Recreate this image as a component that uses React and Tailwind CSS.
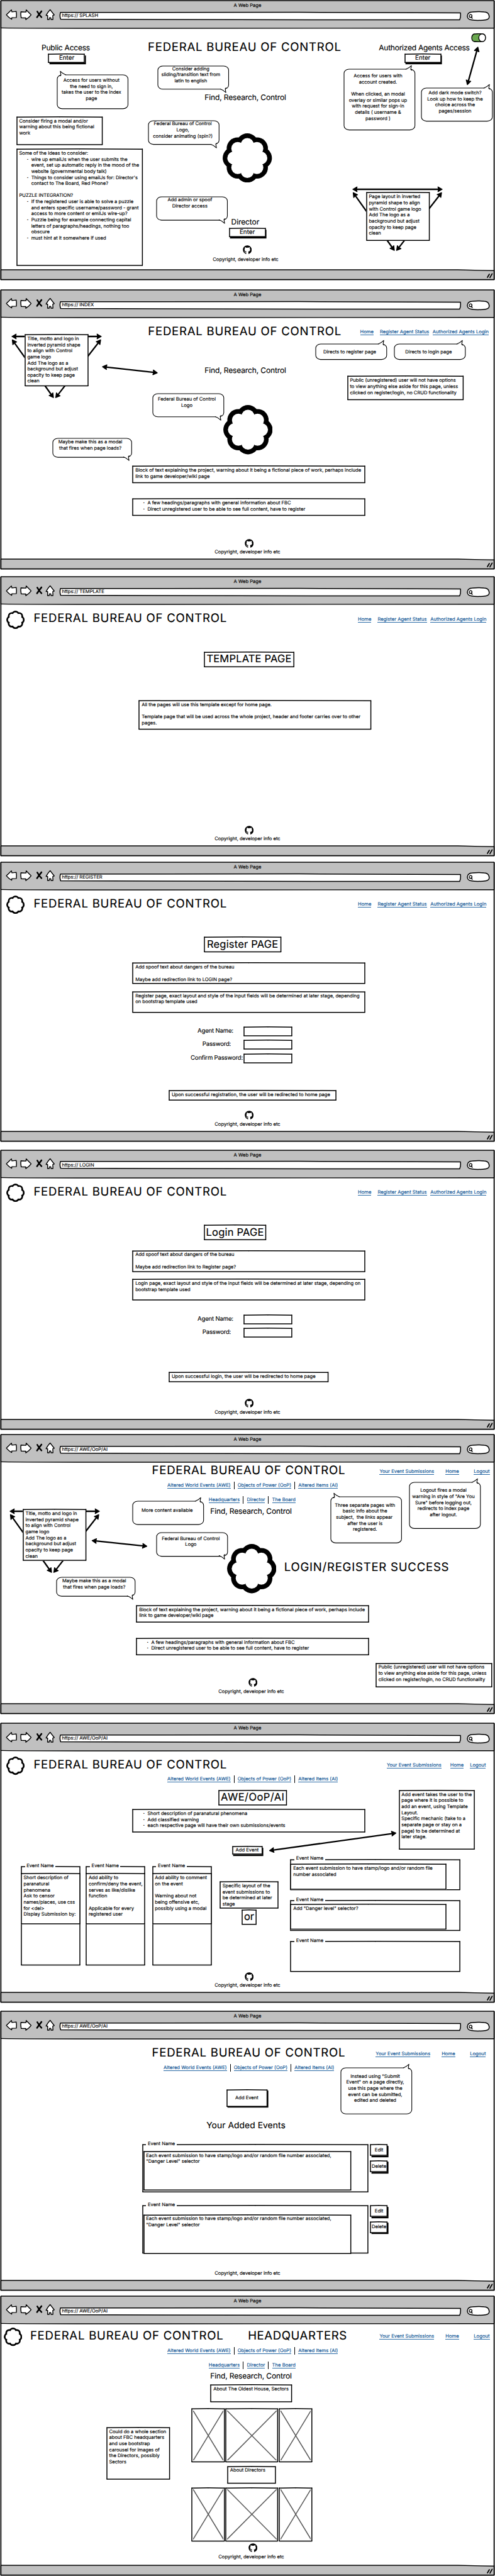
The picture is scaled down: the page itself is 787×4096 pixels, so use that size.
import React from "react";
import { FaGithub } from "react-icons/fa";

/* ---------- sketch primitives ---------- */

function Frame() {
  return (
    <svg className="pointer-events-none absolute inset-[0.7px] h-[calc(100%-1.4px)] w-[calc(100%-1.4px)] overflow-visible" stroke="#000" strokeWidth="1.5" strokeLinecap="round">
      <line x1="0" y1="0.2" x2="50%" y2="-0.2" />
      <line x1="50%" y1="-0.2" x2="100%" y2="0.2" />
      <g transform="translate(0 0.1)">
        <line x1="0" y1="100%" x2="100%" y2="100%" />
      </g>
      <line x1="0" y1="0" x2="0" y2="100%" />
      <line x1="100%" y1="0" x2="100%" y2="100%" />
    </svg>
  );
}

function Note({ className = "", text, children, pad = "pt-[2.6px]" }) {
  return (
    <div className={`${className.includes("absolute") ? "" : "relative"} shrink-0 bg-white ${className}`}>
      <Frame />
      <div className={`pl-[4.4px] whitespace-pre ${pad}`}>{text}</div>
      {children}
    </div>
  );
}

function Bullets({ items, className = "" }) {
  return (
    <ul className={className}>
      {items.map((t) => (
        <li key={t} className="flex">
          <span className="w-[8px] shrink-0 pl-[1px] font-bold">·</span>
          <span className="whitespace-pre">{t}</span>
        </li>
      ))}
    </ul>
  );
}

const TAILS = {
  tl: "left-[4.5px] -top-[5.4px]",
  tr: "right-[4.5px] -top-[5.4px] -scale-x-100",
  br: "right-[4px] -bottom-[5px] -scale-100",
};

function Bubble({ className, text, tail, pad }) {
  return (
    <div className={`absolute ${className}`}>
      <svg className="absolute inset-[0.6px] h-[calc(100%-1.2px)] w-[calc(100%-1.2px)] overflow-visible">
        <rect width="100%" height="100%" rx="8" ry="6.5" fill="#fff" stroke="#000" strokeWidth="1.1" />
      </svg>
      <svg className={`absolute h-[7.5px] w-[11px] overflow-visible ${TAILS[tail]}`} viewBox="0 0 11 7.5">
        <path d="M1.6 7.4 L1.9 5.4 L9.2 5.4 L9.4 6.6 Z" fill="#fff" />
        <path d="M0 7.6 Q1.4 7.4 1.9 6.4 L0.9 0.4 Q4.6 4.2 9.6 6" fill="#fff" stroke="#000" strokeWidth="1.1" strokeLinejoin="round" strokeLinecap="round" />
      </svg>
      <div className={`relative pr-[4px] text-center whitespace-pre ${pad}`}>{text}</div>
    </div>
  );
}

function Button({ className = "", label, size = "" }) {
  return (
    <div className={`relative flex shrink-0 items-center justify-center bg-white shadow-[1.6px_2.2px_0_#000] ${className}`}>
      <Frame />
      <span className={size}>{label}</span>
    </div>
  );
}

function Fieldset({ className = "", children }) {
  return (
    <div className={`relative shrink-0 ${className}`}>
      <Frame />
      <span className="absolute -top-[5.6px] left-[6.5px] bg-white px-[2.6px]">Event Name</span>
      {children}
    </div>
  );
}

const LOBES = [0, 45, 90, 135, 180, 225, 270, 315].map((deg) => {
  const a = (deg * Math.PI) / 180;
  return [106 * Math.cos(a), 106 * Math.sin(a)];
});

function Emblem({ className }) {
  return (
    <svg className={`shrink-0 ${className}`} viewBox="-193 -193 386 386">
      {LOBES.map(([x, y], i) => (
        <circle key={i} cx={x} cy={y} r="86.5" fill="#000" />
      ))}
      {LOBES.map(([x, y], i) => (
        <circle key={i} cx={x} cy={y} r="50.5" fill="#fff" />
      ))}
      <circle r="127" fill="#fff" />
    </svg>
  );
}

function Arrow({ from, to }) {
  const [x1, y1] = from;
  const [x2, y2] = to;
  const a = Math.atan2(y2 - y1, x2 - x1);
  const deg = (a * 180) / Math.PI;
  const dx = 4 * Math.cos(a);
  const dy = 4 * Math.sin(a);
  const head = "M1 0 L7.6 -3.7 L6.8 0 L7.6 3.7 Z";
  return (
    <g stroke="#000" strokeLinejoin="round">
      <line x1={x1 + dx} y1={y1 + dy} x2={x2 - dx} y2={y2 - dy} strokeWidth="2.3" />
      <path d={head} strokeWidth="1.4" transform={`translate(${x1} ${y1}) rotate(${deg})`} />
      <path d={head} strokeWidth="1.4" transform={`translate(${x2} ${y2}) rotate(${deg + 180})`} />
    </g>
  );
}

function Arrows({ children }) {
  return <svg className="pointer-events-none absolute inset-0 h-full w-full overflow-visible">{children}</svg>;
}

function Pyramid({ className, noteClass, text }) {
  return (
    <div className={`absolute h-[100px] w-[144px] ${className}`}>
      <Arrows>
        <Arrow from={[0, 2]} to={[144, 2]} />
        <Arrow from={[1, 6.6]} to={[67.5, 100]} />
        <Arrow from={[142.6, 6.6]} to={[70, 100]} />
      </Arrows>
      <Note className={`absolute ${noteClass}`} text={text} />
    </div>
  );
}

/* ---------- browser chrome ---------- */

function Outline() {
  return (
    <svg className="pointer-events-none absolute inset-0 h-full w-full overflow-visible" viewBox="0 0 787 444" fill="none" stroke="#000" strokeWidth="1.7">
      <path d="M1 0 H786" />
      <path d="M1.4 0 V444" />
      <path d="M785.6 0 V444" />
      <path d="M1 43.4 Q60 44.2 200 44 T786 43.8" strokeWidth="1.4" />
      <path d="M1 428 H728 L786 429.4" strokeWidth="1.3" />
      <path d="M1 443.6 H786" strokeWidth="1.9" />
      <g strokeWidth="1.8" strokeLinecap="round">
        <path d="M775 440 L778 435" />
        <path d="M779 440.4 L782.4 434.4" />
      </g>
    </svg>
  );
}

function NavIcons() {
  return (
    <svg className="h-[18.4px] w-[80px] overflow-visible" viewBox="40 65 390 90" fill="#fff" stroke="#000" strokeWidth="7" strokeLinejoin="round" strokeLinecap="round">
      <path d="M50 112 L89 74 L93 89 L126 85 Q131 108 127 133 L92 134 L91 146 Q66 132 50 112 Z" />
      <path d="M242 112 L204 74 L202 90 L163 88 Q159 110 165 135 L201 136 L201 149 Q226 134 242 112 Z" />
      <path d="M290 86 Q304 112 323 131 M323 84 Q304 108 288 131" fill="none" strokeWidth="12" />
      <path d="M390 72 L422 113 L411 117 L412 148 L397 148 L395 134 L385 134 L383 148 L370 148 L371 118 L359 116 Q372 90 390 72 Z" />
    </svg>
  );
}

function Chrome({ path }) {
  return (
    <div className="h-[44px] bg-[#c0c0c0]">
      <div className="flex h-[17px] justify-center pt-[3.2px]">A Web Page</div>
      <div className="flex h-[14.4px] items-center pl-[8.2px]">
        <div className="-mt-[5px]">
          <NavIcons />
        </div>
        <div className="relative ml-[6.6px] flex h-[12.6px] w-[638px] items-center pb-[0.5px] pl-[3.8px] whitespace-pre">
          <svg className="absolute inset-0 h-full w-full overflow-visible" viewBox="0 0 638 12.6" preserveAspectRatio="none">
            <path d="M1.2 0.8 L380 0.6 L637 1.4 Q638 7 635.8 12.6 L400 12.4 L1.4 11.6 Q-0.6 6 1.2 0.8 Z" fill="#fff" stroke="#000" strokeWidth="1.5" />
          </svg>
          <span className="relative">{`https:// ${path}`}</span>
        </div>
        <svg className="ml-[9.4px] h-[15px] w-[37px] overflow-visible" viewBox="0 0 37 15">
          <path d="M1 7.5 Q1.5 1.4 9 1 Q18 0 28 1 Q34.6 1.2 35.6 7 Q36.6 12.6 31 13.4 Q18 15.4 7 13.6 Q1.4 13 1 7.5 Z" fill="#fff" stroke="#000" strokeWidth="1.5" />
          <circle cx="6.2" cy="7.4" r="2.2" fill="none" stroke="#000" strokeWidth="1.3" />
          <path d="M7.2 8.8 L8.8 11.2" stroke="#000" strokeWidth="1.5" strokeLinecap="round" />
        </svg>
      </div>
    </div>
  );
}

function Browser({ path, className = "", children }) {
  return (
    <section className={`relative h-[444px] shrink-0 ${className}`}>
      <Chrome path={path} />
      <div className="relative flex h-[384px] flex-col bg-white">{children}</div>
      <div className="h-[16px] bg-[#c0c0c0]" />
      <Outline />
    </section>
  );
}

/* ---------- page parts ---------- */

function Title({ children = "FEDERAL BUREAU OF CONTROL", className = "" }) {
  return <h1 className={`shrink-0 text-[18.6px] leading-[22px] tracking-[0.75px] whitespace-pre ${className}`}>{children}</h1>;
}

function Motto({ className }) {
  return <h2 className={`shrink-0 text-[12px] leading-[14px] tracking-[-0.13px] whitespace-pre ${className}`}>Find, Research, Control</h2>;
}

function Link({ children, className = "" }) {
  return <a className={`shrink-0 border-b border-[#2a6ba6] leading-[8px] tracking-[0.03px] whitespace-pre text-[#0b5394] ${className}`}>{children}</a>;
}

function Header({ className, children, links }) {
  return (
    <header className={`flex h-[22px] shrink-0 items-center ${className}`}>
      {children}
      <nav className="mt-[4px] ml-auto flex">{links}</nav>
    </header>
  );
}

function PublicLinks({ className = "" }) {
  return (
    <div className={`flex ${className}`}>
      <Link className="mr-[10px]">Home</Link>
      <Link className="mr-[5.5px]">Register Agent Status</Link>
      <Link>Authorized Agents Login</Link>
    </div>
  );
}

function AgentLinks({ className = "", gap = "gap-[18px]", last = "ml-[5.6px]" }) {
  return (
    <div className={`flex ${gap} ${className}`}>
      <Link>Your Event Submissions</Link>
      <Link>Home</Link>
      <Link className={last}>Logout</Link>
    </div>
  );
}

function LinkBar({ className, items }) {
  return (
    <nav className={`flex h-[12.4px] shrink-0 items-center gap-[5.1px] ${className}`}>
      {items.map((t, i) => (
        <React.Fragment key={t}>
          {i > 0 && <span className="h-full w-px bg-black" />}
          <Link className="mt-[0.4px]">{t}</Link>
        </React.Fragment>
      ))}
    </nav>
  );
}

const TOPICS = ["Altered World Events (AWE)", "Objects of Power (OoP)", "Altered Items (AI)"];
const PLACES = ["Headquarters", "Director", "The Board"];

function Footer({ className = "pb-[6.2px]", icon = true }) {
  return (
    <footer className={`mt-auto flex shrink-0 flex-col items-center ${className}`}>
      {icon && <FaGithub className="mb-[2.1px] ml-[5px] h-[14.4px] w-[14.4px]" />}
      <p className="whitespace-pre">Copyright, developer info etc</p>
    </footer>
  );
}

function Heading({ className, children }) {
  return (
    <div className={`relative flex shrink-0 items-center justify-center bg-white text-[16.5px] leading-[20px] whitespace-pre ${className}`}>
      <Frame />
      <span className="-mt-[2px]">{children}</span>
    </div>
  );
}

function Field({ label, labelClass = "", className = "" }) {
  return (
    <div className={`flex h-[15.4px] items-center ${className}`}>
      <div className={`flex w-[84px] shrink-0 justify-center text-[9.6px] leading-[12px] tracking-[-0.2px] whitespace-pre ${labelClass}`}>{label}</div>
      <div className="relative ml-auto h-full w-[77.3px] bg-white">
        <Frame />
      </div>
    </div>
  );
}

function Picture({ className }) {
  return (
    <div className={`relative h-full ${className}`}>
      <Frame />
      <svg className="absolute inset-x-[2.4px] inset-y-[3px] h-[calc(100%-6px)] w-[calc(100%-4.8px)]" stroke="#595959" strokeWidth="1.5">
        <line x1="0" y1="0" x2="100%" y2="100%" />
        <line x1="100%" y1="0" x2="0" y2="100%" />
      </svg>
    </div>
  );
}

function Carousel({ className }) {
  return (
    <div className={`flex h-[85.7px] shrink-0 gap-[1.2px] ${className}`}>
      <Picture className="w-[53.2px]" />
      <Picture className="w-[83.8px]" />
      <Picture className="w-[53.2px]" />
    </div>
  );
}

const PROJECT = "Block of text explaining the project, warning about it being a fictional piece of work, perhaps include\nlink to game developer/wiki page";
const GENERAL = ["A few headings/paragraphs with general information about FBC", "Direct unregistered user to be able to see full content, have to register"];
const UNREGISTERED = "Public (unregistered) user will not have options\nto view anything else aside for this page, unless\nclicked on register/login, no CRUD functionality";
const INVERTED = "Title, motto and logo in\ninverted pyramid shape\nto align with Control\ngame logo\nAdd The logo as a\nbackground but adjust\nopacity to keep page\nclean";

/* ---------- pages ---------- */

function Splash() {
  return (
    <Browser path="SPLASH" className="mt-[1px]">
      <div className="grid grid-cols-[235px_310px_1fr]">
        <div className="flex flex-col pt-[24.3px]">
          <h3 className="ml-[66px] text-[12px] leading-[14px] tracking-[-0.22px] whitespace-pre">Public Access</h3>
          <Button className="mt-[2.3px] ml-[76.8px] h-[14.6px] w-[58.4px]" size="text-[9.8px]" label="Enter" />
          <Note className="mt-[85px] ml-[26.1px] h-[45.2px] w-[137px]" text={"Consider firing a modal and/or\nwarning about this being fictional\nwork"} />
          <Note className="mt-[6.1px] ml-[26.1px] h-[186.3px] w-[200.8px]" text="Some of the Ideas to consider:">
            <Bullets
              className="pl-[15.6px]"
              items={[
                "wire up emailJs when the user submits the\nevent, set up automatic reply in the mood of the\nwebsite (governmental body talk)",
                "Things to consider using emailJs for: Director's\ncontact to The Board, Red Phone?\n ",
              ]}
            />
            <p className="pl-[4.4px]">PUZZLE INTEGRATION?</p>
            <Bullets
              className="pl-[15.6px]"
              items={[
                "If the registered user is able to solve a puzzle\nand enters specific username/password - grant\naccess to more content or emilJs wire-up?",
                "Puzzle being for example connecting capital\nletters of paragraphs/headings, nothing too\nobscure",
                "must hint at it somewhere if used",
              ]}
            />
          </Note>
        </div>
        <div className="flex flex-col pt-[19.4px]">
          <Title />
          <Motto className="mt-[61.9px] ml-[90.3px]" />
          <Emblem className="mt-[49.8px] ml-[119.4px] h-[78.4px] w-[78.4px]" />
          <h3 className="mt-[55.9px] ml-[132.6px] text-[12px] leading-[14px] tracking-[-0.1px]">Director</h3>
          <Button className="mt-[2.3px] ml-[128.9px] h-[14.6px] w-[58.4px]" size="text-[9.8px]" label="Enter" />
          <FaGithub className="mt-[12.6px] ml-[151px] h-[14.4px] w-[14.4px]" />
          <p className="mt-[3.6px] ml-[103.3px] whitespace-pre">Copyright, developer info etc</p>
        </div>
        <div className="flex flex-col pt-[8.1px]">
          <svg className="ml-[204.3px] h-[14px] w-[24px]" viewBox="0 0 24 14">
            <path d="M5 1 Q12 0.2 19 1 Q23 2 22.8 7 Q22.6 12.6 18 13.2 Q10 13.8 4.4 13 Q1 11.6 1 7 Q1.4 2 5 1 Z" fill="#6aa84f" stroke="#000" strokeWidth="1.3" />
            <ellipse cx="17.6" cy="7" rx="5.4" ry="6.1" fill="#fff" stroke="#000" strokeWidth="1.3" />
          </svg>
          <h3 className="mt-[2.2px] ml-[57.3px] text-[12px] leading-[14px] tracking-[-0.25px] whitespace-pre">Authorized Agents Access</h3>
          <Button className="mt-[2.3px] ml-[98px] h-[14.6px] w-[58.4px]" size="text-[9.8px]" label="Enter" />
        </div>
      </div>
      <Bubble tail="tl" className="top-[73.4px] left-[90.5px] h-[55.1px] w-[113.7px]" pad="pt-[4.5px]" text={"Access for users without\nthe need to sign in,\ntakes the user to the index\npage"} />
      <Bubble tail="br" className="top-[59.2px] left-[250px] h-[38px] w-[113.7px]" pad="pt-[0.4px] !pr-[7px]" text={"Consider adding\nsliding/transition text from\nlatin to english"} />
      <Bubble tail="br" className="top-[146.8px] left-[235.9px] h-[38.8px] w-[113.5px]" pad="pt-[0.7px]" text={"Federal Bureau of Control\nLogo,\nconsider animating (spin?)"} />
      <Bubble tail="br" className="top-[267.5px] left-[248.5px] h-[38.3px] w-[113.7px]" pad="pt-[0.4px] !pr-[7px]" text={"Add admin or spoof\nDirector access"} />
      <Bubble tail="tr" className="top-[64.7px] left-[546px] h-[97.8px] w-[113.9px]" pad="pt-[6.5px]" text={"Access for users with\naccount created.\n\nWhen clicked, an modal\noverlay or similar pops up\nwith request for sign-in\ndetails ( username &\npassword )"} />
      <Bubble tail="tr" className="top-[94.3px] left-[669px] h-[53.8px] w-[114px]" pad="pt-[3.9px] !pr-[5px]" text={"Add dark mode switch?\nLook up how to keep the\nchoice across the\npages/session"} />
      <Arrows>
        <Arrow from={[760, 29]} to={[742.8, 90.5]} />
      </Arrows>
      <Pyramid
        className="top-[253.6px] left-[560px]"
        noteClass="left-[22px] top-[7.2px] h-[77.5px] w-[101px]"
        text={"Page layout in inverted\npyramid shape to align\nwith Control game logo\nAdd The logo as a\nbackground but adjust\nopacity to keep page\nclean"}
      />
    </Browser>
  );
}

function Index() {
  return (
    <Browser path="INDEX" className="mt-[15.8px]">
      <Header className="mt-[11px] pl-[235.3px]" links={<PublicLinks className="mr-[10px]" />}>
        <Title />
      </Header>
      <Motto className="mt-[43.9px] ml-[325.3px]" />
      <Emblem className="mt-[48.4px] ml-[354.9px] h-[78.5px] w-[78.5px]" />
      <Note className="mt-[18.1px] ml-[210.8px] h-[27.9px] w-[370.4px]" text={PROJECT} />
      <Note className="mt-[24px] ml-[210.8px] h-[27.9px] w-[370.4px]">
        <Bullets className="pl-[15.6px]" items={GENERAL} />
      </Note>
      <Footer />
      <Pyramid className="top-[28.2px] left-[18px]" noteClass="left-[21px] -top-[1.5px] h-[82.7px] w-[101.4px]" text={INVERTED} />
      <Arrows>
        <Arrow from={[162, 78]} to={[251, 87.9]} />
      </Arrows>
      <Bubble tail="tr" className="top-[41.8px] left-[501px] h-[25.8px] w-[114px]" pad="pt-[8.8px]" text="Directs to register page" />
      <Bubble tail="tr" className="top-[41.8px] left-[626.4px] h-[25.8px] w-[114px]" pad="pt-[8.8px]" text="Directs to login page" />
      <Note className="absolute top-[92.9px] left-[552px] h-[38.8px] w-[184.8px]" text={UNREGISTERED} />
      <Bubble tail="br" className="top-[120.4px] left-[242px] h-[38px] w-[114px]" pad="pt-[5.1px]" text={"Federal Bureau of Control\nLogo"} />
      <Bubble tail="br" className="top-[191.5px] left-[83.3px] h-[31.3px] w-[126.5px]" pad="pt-[1.9px] !pr-[6px]" text={"Maybe make this as a modal\nthat fires when page loads?"} />
    </Browser>
  );
}

function TemplateHeader() {
  return (
    <Header className="mt-[11px] pl-[10px]" links={<PublicLinks className="mr-[13.6px]" />}>
      <Emblem className="mt-[4px] h-[29.2px] w-[29.2px]" />
      <Title className="ml-[14.2px]" />
    </Header>
  );
}

function Template() {
  return (
    <Browser path="TEMPLATE" className="mt-[12.4px]">
      <TemplateHeader />
      <Heading className="mt-[41.9px] ml-[324.2px] h-[24.6px] w-[143.6px] tracking-[0.16px]">TEMPLATE PAGE</Heading>
      <Note
        className="mt-[52.2px] ml-[220.8px] h-[46.7px] w-[370px]"
        pad="pt-[3.2px]"
        text={"All the pages will use this template except for home page.\n\nTemplate page that will be used across the whole project, header and footer carries over to other\npages."}
      />
      <Footer />
    </Browser>
  );
}

function Register() {
  return (
    <Browser path="REGISTER" className="mt-[9.5px]">
      <TemplateHeader />
      <Heading className="mt-[42.1px] ml-[324.2px] h-[24.7px] w-[123px] tracking-[0.2px]">Register PAGE</Heading>
      <Note className="mt-[16.3px] ml-[210.8px] h-[34px] w-[370.4px]" text={"Add spoof text about dangers of the bureau\n\nMaybe add redirection link to LOGIN page?"} />
      <Note className="mt-[11.5px] ml-[210.8px] h-[34px] w-[370.4px]" text={"Register page, exact layout and style of the input fields will be determined at later stage, depending\non bootstrap template used"} />
      <div className="mt-[22.2px] ml-[302.5px] flex w-[162.3px] flex-col gap-[5.9px]">
        <Field label="Agent Name:" labelClass="-ml-[2px]" />
        <Field label="Password:" />
        <Field label="Confirm Password:" />
      </div>
      <Note className="mt-[43px] ml-[268.5px] h-[16.6px] w-[266.5px]" text="Upon successful registration, the user will be redirected to home page" />
      <Footer />
    </Browser>
  );
}

function Login() {
  return (
    <Browser path="LOGIN" className="mt-[13.9px]">
      <TemplateHeader />
      <Heading className="mt-[41.7px] ml-[324.2px] h-[24.6px] w-[98.9px] tracking-[0.2px]">Login PAGE</Heading>
      <Note className="mt-[16px] ml-[210.8px] h-[34.2px] w-[370.4px]" text={"Add spoof text about dangers of the bureau\n\nMaybe add redirection link to Register page?"} />
      <Note className="mt-[11.4px] ml-[210.8px] h-[34.2px] w-[370.4px]" text={"Login page, exact layout and style of the input fields will be determined at later stage, depending on\nbootstrap template used"} />
      <div className="mt-[22.2px] ml-[302.5px] flex w-[162.3px] flex-col gap-[5.9px]">
        <Field label="Agent Name:" labelClass="-ml-[2px]" />
        <Field label="Password:" />
      </div>
      <Note className="mt-[55px] ml-[268.5px] h-[16.4px] w-[254px]" text="Upon successful login, the user will be redirected to home page" />
      <Footer />
    </Browser>
  );
}

function Success() {
  return (
    <Browser path="AWE/OoP/AI" className="mt-[8.1px]">
      <Header className="mt-[2.6px] pl-[241.5px]" links={<AgentLinks className="mr-[8.5px]" />}>
        <Title />
      </Header>
      <LinkBar className="mt-[6.6px] ml-[266px]" items={TOPICS} />
      <LinkBar className="mt-[10.8px] ml-[331.8px]" items={PLACES} />
      <Motto className="mt-[4.2px] ml-[334.3px]" />
      <div className="mt-[45.6px] ml-[360.9px] flex shrink-0 items-center gap-[12.3px]">
        <Emblem className="h-[78.5px] w-[78.5px]" />
        <Title className="-mt-[4px]">LOGIN/REGISTER SUCCESS</Title>
      </div>
      <Note className="mt-[18.5px] ml-[216.8px] h-[27.6px] w-[370.4px]" text={PROJECT} />
      <Note className="mt-[24.3px] ml-[216.8px] h-[27.6px] w-[370.4px]">
        <Bullets className="pl-[15.6px]" items={GENERAL} />
      </Note>
      <Footer className="pb-[14.5px] pl-[12px]" />
      <Bubble tail="tr" className="top-[61.8px] left-[210.8px] h-[38.3px] w-[113.9px]" pad="pt-[10.6px]" text="More content available" />
      <Pyramid className="top-[76px] left-[14.6px]" noteClass="left-[21.5px] -top-[1.1px] h-[82.4px] w-[101px]" text={INVERTED} />
      <Arrows>
        <Arrow from={[145.5, 124.5]} to={[234.4, 133.8]} />
      </Arrows>
      <Bubble tail="br" className="top-[111.4px] left-[248.4px] h-[38.8px] w-[114px]" pad="pt-[5.6px]" text={"Federal Bureau of Control\nLogo"} />
      <Bubble tail="br" className="top-[182.8px] left-[89.8px] h-[31.3px] w-[126px]" pad="pt-[1.9px] !pr-[6px]" text={"Maybe make this as a modal\nthat fires when page loads?"} />
      <Bubble tail="tl" className="top-[54.8px] left-[525.5px] h-[74.6px] w-[113.6px]" pad="pt-[9.4px]" text={"Three separate pages with\nbasic info about the\nsubject,  the links appear \nafter the user is\nregistered."} />
      <Bubble tail="tr" className="top-[31.6px] left-[650px] h-[74.6px] w-[114px]" pad="pt-[9.1px]" text={"Logout fires a modal\nwarning in style of \"Are You\nSure\" before logging out,\nredirects to index page\nafter logout."} />
      <Note className="absolute top-[319.2px] left-[597.3px] h-[38.6px] w-[185.2px]" text={UNREGISTERED} />
    </Browser>
  );
}

function EventColumn({ className = "", text }) {
  return (
    <Fieldset className={`mt-[11.6px] h-[157.8px] w-[94.4px] pt-[11.3px] ${className}`}>
      <Note className="h-[81.3px]" text={text} />
    </Fieldset>
  );
}

function Phenomena() {
  return (
    <Browser path="AWE/OoP/AI" className="mt-[15.5px]">
      <Header className="mt-[10.8px] pl-[10px]" links={<AgentLinks gap="gap-[14px]" last="-ml-[4px]" className="mr-[14.6px]" />}>
        <Emblem className="mt-[4px] h-[29.2px] w-[29.2px]" />
        <Title className="ml-[14.2px]" />
      </Header>
      <LinkBar className="mt-[5.7px] ml-[266px]" items={TOPICS} />
      <Heading className="mt-[11.2px] ml-[347.3px] h-[24.4px] w-[108.9px] tracking-[0.43px]">AWE/OoP/AI</Heading>
      <Note className="mt-[5.8px] ml-[210.8px] h-[37.4px] w-[370.4px]">
        <Bullets className="pl-[15.6px]" items={["Short description of paranatural phenomena", "Add classified warning", "each respective page will have their own submissions/events"]} />
      </Note>
      <Button className="mt-[21.8px] ml-[368.9px] h-[13.3px] w-[48.2px]" label="Add Event" />
      <div className="mt-[7px] ml-[33.1px] flex shrink-0">
        <EventColumn text={"Short description of\nparanatural\nphenomena\nAsk to censor\nnames/places, use css\nfor <del>\nDisplay Submission by:"} />
        <EventColumn className="ml-[9px]" text={"Add ability to\nconfirm/deny the event,\nserves as like/dislike\nfunction\n\nApplicable for every\nregistered user"} />
        <EventColumn className="ml-[11px]" text={"Add ability to comment\non the event\n\nWarning about not\nbeing offensive etc,\npossibly using a modal"} />
        <div className="ml-[13px] flex w-[93.4px] flex-col items-center pt-[35.4px]">
          <Note className="h-[43.2px] w-full" text={"Specific layout of the\nevent submissions to\nbe determined at later\nstage"} />
          <Heading className="mt-[1.7px] h-[24.1px] w-[23.6px] tracking-[-0.2px]">or</Heading>
        </div>
        <div className="ml-[19.1px] flex w-[270.5px] flex-col">
          <Fieldset className="h-[49px] pt-[7.5px]">
            <Note className="h-[41.2px] w-[248.4px]" text={"Each event submission to have stamp/logo and/or random file\nnumber associated"} />
          </Fieldset>
          <Fieldset className="mt-[16.8px] h-[48.8px] pt-[6.1px]">
            <Note className="h-[40.9px] w-[248.4px]" text={"Add \"Danger level\" selector?"} />
          </Fieldset>
          <Fieldset className="mt-[15.7px] h-[49px]" />
        </div>
      </div>
      <Footer />
      <Note
        className="absolute top-[62.1px] left-[633.9px] h-[94.6px] w-[120.5px]"
        text={"Add event takes the user to the\npage where it is possible to\nadd an event, using Template\nLayout.\nSpecific mechanic (take to a\nseparate page or stay on a\npage) to be determined at\nlater stage."}
      />
      <Arrows>
        <Arrow from={[427.6, 158.7]} to={[630.4, 130.6]} />
      </Arrows>
    </Browser>
  );
}

function EventRow({ className, height, noteClass }) {
  return (
    <div className={`flex shrink-0 gap-[3.5px] ${className}`}>
      <Fieldset className={`w-[359.3px] ${height}`}>
        <Note className={`ml-[2px] w-[330.1px] ${noteClass}`} text={"Each event submission to have stamp/logo and/or random file number associated,\n\"Danger Level\" selector"} />
      </Fieldset>
      <div className="flex flex-col gap-[7px]">
        <Button className="h-[18.4px] w-[27.8px]" label="Edit" />
        <Button className="h-[18.4px] w-[27.8px]" label="Delete" />
      </div>
    </div>
  );
}

function Submissions() {
  return (
    <Browser path="AWE/OoP/AI" className="mt-[13.9px]">
      <Header className="mt-[11px] pl-[241.5px]" links={<AgentLinks className="mr-[14.6px]" />}>
        <Title />
      </Header>
      <LinkBar className="mt-[6.9px] ml-[260px]" items={TOPICS} />
      <Button className="mt-[27.5px] ml-[359.9px] h-[27.6px] w-[65px]" label="Add Event" />
      <h2 className="mt-[23px] ml-[328.2px] shrink-0 text-[13.8px] leading-[16px] tracking-[0.08px] whitespace-pre">Your Added Events</h2>
      <EventRow className="mt-[21.3px] ml-[225.9px]" height="h-[76.6px] pt-[10.2px]" noteClass="h-[62.6px]" />
      <EventRow className="mt-[20.3px] ml-[225.9px]" height="h-[76.9px] pt-[14.2px]" noteClass="h-[62.5px]" />
      <Footer icon={false} />
      <Bubble tail="tr" className="top-[45.6px] left-[541.6px] h-[74.5px] w-[113.9px]" pad="pt-[9.1px]" text={"Instead using \"Submit\nEvent\" on a page directly,\nuse this page where the\nevent can be submitted,\nedited and deleted"} />
    </Browser>
  );
}

function Headquarters() {
  return (
    <Browser path="AWE/OoP/AI" className="mt-[8.7px]">
      <Header className="mt-[8.2px] pl-[6px]" links={<AgentLinks className="mr-[8.5px]" />}>
        <Emblem className="mt-[4px] h-[29.4px] w-[29.4px]" />
        <Title className="ml-[12.5px]" />
        <Title className="ml-[38.6px] !tracking-[0.57px]">HEADQUARTERS</Title>
      </Header>
      <LinkBar className="mt-[7px] ml-[266px]" items={TOPICS} />
      <LinkBar className="mt-[10.3px] ml-[331.8px]" items={PLACES} />
      <Motto className="mt-[4.2px] ml-[334.3px]" />
      <Note className="mt-[6.4px] ml-[334.8px] h-[28.2px] w-[130px]" text="About The Oldest House, Sectors" />
      <Carousel className="mt-[9.9px] ml-[304.2px]" />
      <Note className="mt-[5.5px] ml-[361.4px] h-[27.9px] w-[77.3px]" text="About Directors" />
      <Carousel className="mt-[6.6px] ml-[304.2px]" />
      <Footer className="pb-[8.4px] pl-[12px]" />
      <Note className="absolute top-[164.4px] left-[169.1px] h-[83.2px] w-[101px]" text={"Could do a whole section\nabout FBC headquarters\nand use bootstrap\ncarousel for images of\nthe Directors, possibly\nSectors"} />
    </Browser>
  );
}

export default function App() {
  return (
    <main className="flex h-[4096px] w-[787px] flex-col overflow-hidden bg-white font-['Inter','Liberation_Sans',sans-serif] text-[7.6px] leading-[9.63px] text-black [-webkit-text-stroke:0.15px_currentColor] [text-rendering:geometricPrecision]">
      <Splash />
      <Index />
      <Template />
      <Register />
      <Login />
      <Success />
      <Phenomena />
      <Submissions />
      <Headquarters />
    </main>
  );
}
